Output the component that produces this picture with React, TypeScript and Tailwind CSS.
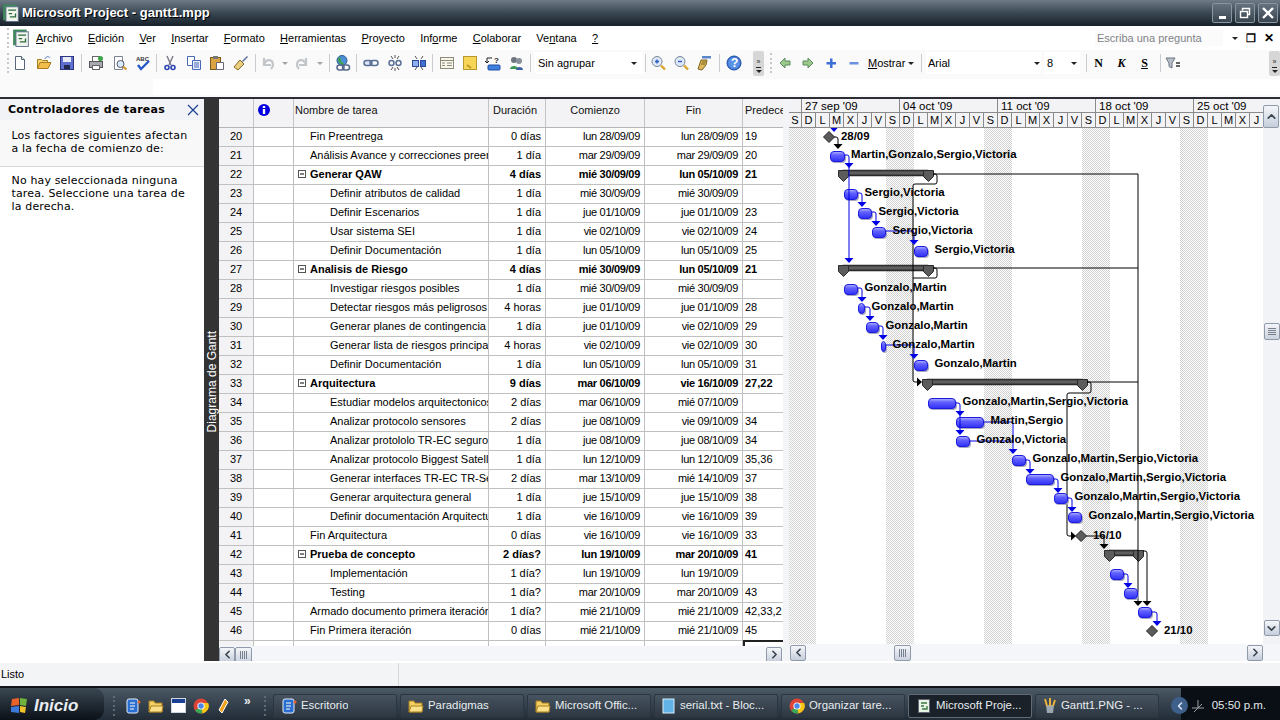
import type { ReactNode } from 'react'
import { ChevronLeft, ChevronRight, ChevronUp, ChevronDown } from 'lucide-react'

type Row = [number, number, string, string, string, string, string]

// id, level (0 summary, 1 top, 2 nested), name, duration, start, end, predecessors
const rows: Row[] = [
  [20, 1, 'Fin Preentrega', '0 días', 'lun 28/09/09', 'lun 28/09/09', '19'],
  [21, 1, 'Análisis Avance y correcciones preentrega', '1 día', 'mar 29/09/09', 'mar 29/09/09', '20'],
  [22, 0, 'Generar QAW', '4 días', 'mié 30/09/09', 'lun 05/10/09', '21'],
  [23, 2, 'Definir atributos de calidad', '1 día', 'mié 30/09/09', 'mié 30/09/09', ''],
  [24, 2, 'Definir Escenarios', '1 día', 'jue 01/10/09', 'jue 01/10/09', '23'],
  [25, 2, 'Usar sistema SEI', '1 día', 'vie 02/10/09', 'vie 02/10/09', '24'],
  [26, 2, 'Definir Documentación', '1 día', 'lun 05/10/09', 'lun 05/10/09', '25'],
  [27, 0, 'Analisis de Riesgo', '4 días', 'mié 30/09/09', 'lun 05/10/09', '21'],
  [28, 2, 'Investigar riesgos posibles', '1 día', 'mié 30/09/09', 'mié 30/09/09', ''],
  [29, 2, 'Detectar riesgos más peligrosos', '4 horas', 'jue 01/10/09', 'jue 01/10/09', '28'],
  [30, 2, 'Generar planes de contingencia', '1 día', 'jue 01/10/09', 'vie 02/10/09', '29'],
  [31, 2, 'Generar lista de riesgos principales', '4 horas', 'vie 02/10/09', 'vie 02/10/09', '30'],
  [32, 2, 'Definir Documentación', '1 día', 'lun 05/10/09', 'lun 05/10/09', '31'],
  [33, 0, 'Arquitectura', '9 días', 'mar 06/10/09', 'vie 16/10/09', '27,22'],
  [34, 2, 'Estudiar modelos arquitectonicos', '2 días', 'mar 06/10/09', 'mié 07/10/09', ''],
  [35, 2, 'Analizar protocolo sensores', '2 días', 'jue 08/10/09', 'vie 09/10/09', '34'],
  [36, 2, 'Analizar protololo TR-EC seguro', '1 día', 'jue 08/10/09', 'jue 08/10/09', '34'],
  [37, 2, 'Analizar protocolo Biggest Satellite', '1 día', 'lun 12/10/09', 'lun 12/10/09', '35,36'],
  [38, 2, 'Generar interfaces TR-EC TR-Sensores', '2 días', 'mar 13/10/09', 'mié 14/10/09', '37'],
  [39, 2, 'Generar arquitectura general', '1 día', 'jue 15/10/09', 'jue 15/10/09', '38'],
  [40, 2, 'Definir documentación Arquitectura', '1 día', 'vie 16/10/09', 'vie 16/10/09', '39'],
  [41, 1, 'Fin Arquitectura', '0 días', 'vie 16/10/09', 'vie 16/10/09', '33'],
  [42, 0, 'Prueba de concepto', '2 días?', 'lun 19/10/09', 'mar 20/10/09', '41'],
  [43, 2, 'Implementación', '1 día?', 'lun 19/10/09', 'lun 19/10/09', ''],
  [44, 2, 'Testing', '1 día?', 'mar 20/10/09', 'mar 20/10/09', '43'],
  [45, 1, 'Armado documento primera iteración', '1 día?', 'mié 21/10/09', 'mié 21/10/09', '42,33,2'],
  [46, 1, 'Fin Primera iteración', '0 días', 'mié 21/10/09', 'mié 21/10/09', '45'],
]

// the chart svg's viewBox uses page pixels, so these numbers read straight off the screenshot
const X0 = 789
const Y0 = 128
const rowTop = (id: number) => 127 + (id - 20) * 19

const bars: [number, number, number, string][] = [
  [21, 830, 845, 'Martin,Gonzalo,Sergio,Victoria'],
  [23, 844, 858, 'Sergio,Victoria'],
  [24, 858, 872, 'Sergio,Victoria'],
  [25, 872, 886, 'Sergio,Victoria'],
  [26, 914, 928, 'Sergio,Victoria'],
  [28, 844, 858, 'Gonzalo,Martin'],
  [29, 858, 865, 'Gonzalo,Martin'],
  [30, 866, 879, 'Gonzalo,Martin'],
  [31, 881, 886, 'Gonzalo,Martin'],
  [32, 914, 928, 'Gonzalo,Martin'],
  [34, 928, 956, 'Gonzalo,Martin,Sergio,Victoria'],
  [35, 956, 984, 'Martin,Sergio'],
  [36, 956, 970, 'Gonzalo,Victoria'],
  [37, 1012, 1026, 'Gonzalo,Martin,Sergio,Victoria'],
  [38, 1026, 1054, 'Gonzalo,Martin,Sergio,Victoria'],
  [39, 1054, 1068, 'Gonzalo,Martin,Sergio,Victoria'],
  [40, 1068, 1082, 'Gonzalo,Martin,Sergio,Victoria'],
  [43, 1110, 1124, ''],
  [44, 1124, 1138, ''],
  [45, 1138, 1152, ''],
]

const summaries: [number, number, number][] = [
  [22, 838, 933],
  [27, 838, 933],
  [33, 922, 1087],
  [42, 1104, 1143],
]

const milestones: [number, number, string][] = [
  [20, 829, '28/09'],
  [41, 1081, '16/10'],
  [46, 1152, '21/10'],
]

const blueLinks = [
  'M845 155H847Q849 155 849 157V262',
  'M858 193H860Q862 193 862 195V206',
  'M872 212H874Q876 212 876 214V225',
  'M886 231H912Q914 231 914 233V244',
  'M858 288H860Q862 288 862 290V301',
  'M865 307H868Q870 307 870 309V320',
  'M879 326H881Q883 326 883 328V339',
  'M886 345H912Q914 345 914 347V358',
  'M956 403H958Q960 403 960 405V434',
  'M984 422H1011Q1013 422 1013 424V453',
  'M970 441H1013',
  'M1026 460H1028Q1030 460 1030 462V473',
  'M1054 479H1056Q1058 479 1058 481V492',
  'M1068 498H1070Q1072 498 1072 500V511',
  'M1124 574H1126Q1128 574 1128 576V587',
  'M1152 612H1155Q1157 612 1157 614V625',
]
const blueHeads: [number, number][] = [
  [849, 167], [849, 262], [862, 206], [876, 225], [914, 244], [862, 301], [870, 320], [883, 339],
  [914, 358], [960, 415], [960, 434], [1013, 453], [1030, 473], [1058, 492], [1072, 511], [1128, 587],
  [1157, 625], [834, 131],
]

const blackLinks = [
  'M834 137H836Q838 137 838 139V148',
  'M933 174H1138V604',
  'M933 268H1138',
  'M1087 382H1138',
  'M933 174H935Q937 174 937 176V182Q937 184 935 184H915Q913 184 913 186V380Q913 382 915 382H918',
  'M933 268H935Q937 268 937 270V276Q937 278 935 278H913',
  'M1087 382H1089Q1091 382 1091 384V391Q1091 393 1089 393H1069Q1067 393 1067 395V534Q1067 536 1069 536H1072',
  'M1086 536H1101Q1104 536 1104 538V548',
  'M1143 551H1145Q1147 551 1147 553V604',
]
const blackDown: [number, number][] = [[838, 148], [1104, 548], [1138, 605], [1147, 605]]
const blackRight: [number, number][] = [[921, 382], [1075, 536]]

function GanttChart() {
  const stripes = [788, 886, 984, 1082, 1180]
  return (
    <svg width={474} height={518} viewBox={`${X0} ${Y0} 474 518`} className="block">
      <defs>
        <pattern id="dots" width="2" height="2" patternUnits="userSpaceOnUse">
          <rect width="2" height="2" fill="#ffffff" />
          <rect width="1" height="1" fill="#d2d2d2" />
          <rect x="1" y="1" width="1" height="1" fill="#d2d2d2" />
        </pattern>
        <linearGradient id="bar" x1="0" y1="0" x2="0" y2="1">
          <stop offset="0" stopColor="#b4b4ff" />
          <stop offset="0.35" stopColor="#6262ff" />
          <stop offset="1" stopColor="#3030f4" />
        </linearGradient>
        <linearGradient id="sum" x1="0" y1="0" x2="0" y2="1">
          <stop offset="0" stopColor="#2c2c2c" />
          <stop offset="0.5" stopColor="#6a6a6a" />
          <stop offset="1" stopColor="#222222" />
        </linearGradient>
      </defs>
      {stripes.map(s => (
        <rect key={s} x={s} y={Y0} width={28} height={518} fill="url(#dots)" />
      ))}
      {summaries.map(([id, a, b]) => {
        const t = rowTop(id) + 5
        return (
          <g key={id}>
            <rect x={a + 5} y={t} width={b - a - 10} height={6} fill="url(#sum)" stroke="#222222" strokeWidth={0.5} />
            {[a, b - 10].map(x => (
              <path key={x} d={`M${x + 0.5} ${t + 0.5}h10v6l-5 5l-5 -5z`} fill="#5c5c5c" stroke="#2a2a2a" />
            ))}
          </g>
        )
      })}
      <g fill="none" stroke="#000000" strokeWidth={1}>
        {blackLinks.map(d => <path key={d} d={d} />)}
      </g>
      {blackDown.map(([x, y]) => <path key={`${x}-${y}`} d={`M${x - 4.5} ${y - 4}h9l-4.5 5z`} fill="#000000" />)}
      {blackRight.map(([x, y]) => <path key={`${x}-${y}`} d={`M${x - 4} ${y - 4.5}v9l5 -4.5z`} fill="#000000" />)}
      {bars.map(([id, a, b]) => {
        const t = rowTop(id) + 5
        return (
          <g key={id}>
            <rect x={a + 1} y={t + 2} width={b - a} height={10} rx={4} fill="#a8a8be" />
            <rect x={a + 0.5} y={t + 0.5} width={b - a - 1} height={10} rx={3.5} fill="url(#bar)" stroke="#1c1ce0" />
          </g>
        )
      })}
      <g fill="none" stroke="#0000e6" strokeWidth={1}>
        {blueLinks.map(d => <path key={d} d={d} />)}
      </g>
      {blueHeads.map(([x, y]) => <path key={`${x}-${y}`} d={`M${x - 4.5} ${y - 4}h9l-4.5 5z`} fill="#0000e6" />)}
      {milestones.map(([id, x]) => {
        const c = rowTop(id) + 10
        return <path key={id} d={`M${x} ${c - 5.5}l5.5 5.5l-5.5 5.5l-5.5 -5.5z`} fill="#5c5c5c" stroke="#222222" />
      })}
      <g className="font-['Liberation_Sans',sans-serif] text-[11.4px] font-bold" fill="#000000">
        {bars.filter(b => b[3]).map(([id, , b, label]) => (
          <text key={id} x={id === 21 ? 851 : b + 6.5} y={rowTop(id) + 12}>{label}</text>
        ))}
        {milestones.map(([id, x, label]) => (
          <text key={id} x={x + 12} y={rowTop(id) + 13}>{label}</text>
        ))}
      </g>
    </svg>
  )
}

function Scroll({ dir, tall }: { dir: 'l' | 'r' | 'u' | 'd'; tall?: boolean }) {
  const Icon = dir === 'l' ? ChevronLeft : dir === 'r' ? ChevronRight : dir === 'u' ? ChevronUp : ChevronDown
  return (
    <div className={`flex w-[16px] shrink-0 items-center justify-center rounded-[2px] border border-[#8f9bab] bg-gradient-to-b from-[#f4f6f9] to-[#c6cedb] ${tall ? 'h-[23px]' : 'h-[16px]'}`}>
      <Icon size={13} strokeWidth={3} className="text-[#39424f]" />
    </div>
  )
}

function Thumb({ vertical = false }: { vertical?: boolean }) {
  return (
    <div className={`flex items-center justify-center gap-px rounded-[2px] border border-[#8f9bab] bg-gradient-to-b from-[#f4f6f9] to-[#cbd2de] ${vertical ? 'h-[17px] w-[16px] flex-col' : 'h-[16px] w-[17px]'}`}>
      {[0, 1, 2, 3].map(i => (
        <div key={i} className={`bg-[#77808e] ${vertical ? 'h-px w-[8px]' : 'h-[8px] w-px'}`} />
      ))}
    </div>
  )
}

// small toolbar drawings, each 16x16
function Tool({ kind, className = '' }: { kind: string; className?: string }) {
  const body: Record<string, ReactNode> = {
    new: <><path d="M3.5 1.5h6l3 3v10h-9z" fill="#fff" stroke="#59667a" /><path d="M9.5 1.5v3h3" fill="#dfe6f2" stroke="#59667a" /></>,
    open: <><path d="M1.5 13.5v-9h4l1 1h5v2" fill="#f7d774" stroke="#a97c1c" /><path d="M1.5 13.5l2.5-6h11l-3 6z" fill="#f3bd4b" stroke="#a97c1c" /><path d="M9 4c1-3 4-3 5-1" fill="none" stroke="#5d7fc0" /></>,
    save: <><rect x="1.5" y="1.5" width="13" height="13" fill="#5f6fd0" stroke="#2b347c" /><rect x="4" y="2" width="8" height="5" fill="#e8eaf8" /><rect x="5" y="10" width="6" height="4" fill="#23284f" /></>,
    print: <><rect x="4.5" y="1.5" width="7" height="5" fill="#fff" stroke="#666" /><rect x="1.5" y="6.5" width="13" height="6" fill="#a9a9b1" stroke="#555" /><rect x="4.5" y="10.5" width="7" height="4" fill="#fff" stroke="#666" /><circle cx="12.5" cy="3.5" r="2.5" fill="#3aa548" /></>,
    preview: <><path d="M2.5 1.5h8v13h-8z" fill="#fff" stroke="#7b8494" /><circle cx="8.5" cy="9" r="3.5" fill="#d9ecff" stroke="#556" /><path d="M11 11.5l3.5 3" stroke="#d0912a" strokeWidth="2.2" /></>,
    spell: <><text x="1" y="6" fontSize="6" fontWeight="700" fill="#333" fontFamily="Liberation Sans">ABC</text><path d="M3 10l3 4l8-8" fill="none" stroke="#2a58c8" strokeWidth="2.4" /></>,
    cut: <><path d="M5 1l4 9M11 1l-4 9" stroke="#778" strokeWidth="1.4" /><circle cx="5" cy="12.5" r="2" fill="none" stroke="#2b45b5" strokeWidth="1.6" /><circle cx="11" cy="12.5" r="2" fill="none" stroke="#2b45b5" strokeWidth="1.6" /></>,
    copy: <><path d="M1.5 1.5h7v9h-7z" fill="#fff" stroke="#4a68b8" /><path d="M6.5 5.5h8v9h-8z" fill="#e8efff" stroke="#4a68b8" /><path d="M8 8h5M8 10h5M8 12h5" stroke="#4a68b8" /></>,
    paste: <><rect x="1.5" y="2.5" width="10" height="12" fill="#d9a441" stroke="#7a5a18" /><rect x="4" y="1" width="5" height="3" fill="#777" /><path d="M7.5 7.5h7v7h-7z" fill="#fff" stroke="#667" /></>,
    brush: <><path d="M9 6l5-5l1 1l-5 5z" fill="#5a6d9a" /><path d="M1 12l6-7l4 4l-6 6z" fill="#e8d080" stroke="#8a6a20" /></>,
    undo: <path d="M4 3v7h7M4 10c2-7 9-6 9 0c0 2-1 3-2 4" fill="none" stroke="#c2c5ca" strokeWidth="2.2" />,
    redo: <path d="M12 3v7H5M12 10c-2-7-9-6-9 0c0 2 1 3 2 4" fill="none" stroke="#c2c5ca" strokeWidth="2.2" />,
    globe: <><circle cx="7" cy="5.5" r="5" fill="#4d8fd6" stroke="#2a5a90" /><path d="M4 2c2 1 3 3 2 5c2 0 3 1 3 3c-3 0-6-2-6-6z" fill="#3fa34d" /><rect x="2" y="10" width="7" height="5" rx="2.5" fill="none" stroke="#56688c" strokeWidth="1.5" /><rect x="7.5" y="10" width="7" height="5" rx="2.5" fill="none" stroke="#56688c" strokeWidth="1.5" /></>,
    link: <><rect x="1" y="5.5" width="8" height="5" rx="2.5" fill="#dde6f5" stroke="#5a6f96" strokeWidth="1.5" /><rect x="7" y="5.5" width="8" height="5" rx="2.5" fill="none" stroke="#5a6f96" strokeWidth="1.5" /></>,
    unlink: <><rect x="2" y="5.5" width="5" height="5" rx="2.5" fill="none" stroke="#5a6f96" strokeWidth="1.5" /><rect x="9" y="5.5" width="5" height="5" rx="2.5" fill="none" stroke="#5a6f96" strokeWidth="1.5" /><path d="M4 1l2 3M12 1l-2 3M4 15l2-3M12 15l-2-3M8 0v3M8 13v3" stroke="#555" /></>,
    split: <><rect x="1.5" y="5.5" width="6" height="6" fill="#8db0f0" stroke="#2a4a98" /><rect x="9.5" y="5.5" width="5" height="6" fill="#3f6fd0" stroke="#2a4a98" /><path d="M4 1l2 3M12 1l-2 3M4 15l2-3M12 15l-2-3" stroke="#555" /></>,
    info: <><rect x="1.5" y="2.5" width="13" height="11" fill="#f8f6ea" stroke="#8c8a78" /><path d="M2 5.5h12M8 8h5M8 10.5h5M3 8h3M3 10.5h3" stroke="#8c8a78" /></>,
    note: <><rect x="1.5" y="1.5" width="13" height="13" fill="#f6d557" stroke="#b7982c" /><path d="M5 10l4 3" stroke="#c29a2a" strokeWidth="2" /></>,
    goto: <><rect x="3" y="10" width="12" height="5" rx="1" fill="#3f7fe0" stroke="#1f4ea0" /><path d="M7 3H2v5M2 8l-2-2M2 8l2-2" stroke="#222" fill="none" /><text x="9" y="8" fontSize="8" fontWeight="700" fill="#222" fontFamily="Liberation Sans">?</text></>,
    people: <><circle cx="6" cy="5" r="3" fill="#6d7680" /><path d="M2 14c0-4 8-4 8 0z" fill="#3d9a52" /><circle cx="11" cy="6" r="3" fill="#8a919b" /><path d="M8 15c0-4 7-4 7 0z" fill="#3f5fa8" /></>,
    zoomin: <><circle cx="7" cy="6.5" r="5" fill="#dfe9f5" stroke="#77859b" /><path d="M5 6.5h4M7 4.5v4" stroke="#2a58c8" strokeWidth="1.4" /><path d="M11 10.5l4 4" stroke="#d9a52a" strokeWidth="2.4" /></>,
    zoomout: <><circle cx="7" cy="6.5" r="5" fill="#dfe9f5" stroke="#77859b" /><path d="M5 6.5h4" stroke="#2a58c8" strokeWidth="1.4" /><path d="M11 10.5l4 4" stroke="#d9a52a" strokeWidth="2.4" /></>,
    gotoTask: <><rect x="6" y="1" width="9" height="2.5" fill="#5d86c8" /><path d="M2 14l3-9h6l-1 5l-4 5z" fill="#dcb95a" stroke="#7d6420" /><path d="M6 7h4M5 9h4" stroke="#7d6420" /></>,
    help: <><circle cx="8" cy="8" r="7" fill="#3f78d8" stroke="#1d4aa0" /><circle cx="8" cy="8" r="5.6" fill="#5a92e6" /><text x="5" y="12.2" fontSize="12" fontWeight="700" fill="#fff" fontFamily="Liberation Sans">?</text></>,
    back: <path d="M3 8l5-5v3h5v4H8v3z" fill="#9cc98a" stroke="#5d8c60" />,
    fwd: <path d="M13 8L8 3v3H3v4h5v3z" fill="#9cc98a" stroke="#5d8c60" />,
    plus: <path d="M7 3.5h2.5v3.5H13v2.5H9.5V13H7V9.5H3.5V7H7z" fill="#3f6fd8" />,
    minus: <rect x="3.5" y="7" width="9" height="2.5" fill="#6a90e0" />,
    filter: <><path d="M1 3h9l-3 5v5l-3-1.5V8z" fill="#b9c0ca" stroke="#6c7480" /><path d="M11 8h4M11 11h4" stroke="#333" strokeWidth="1.5" /></>,
  }
  return <svg width={16} height={16} viewBox="0 0 16 16" className={`shrink-0 ${className}`}>{body[kind]}</svg>
}

function Sep({ className = '' }: { className?: string }) {
  return <div className={`h-[18px] w-px shrink-0 bg-[#c9ccd1] ${className}`} />
}

function Grip({ className = 'ml-[3px]' }: { className?: string }) {
  return (
    <div className={`mr-[3px] flex h-[20px] w-[2px] shrink-0 flex-col justify-between ${className}`}>
      {[0, 1, 2, 3, 4].map(i => <div key={i} className="h-[2px] w-[2px] bg-[#c5c8cc]" />)}
    </div>
  )
}

function DarkGrip({ className = '' }: { className?: string }) {
  return (
    <div className={`flex h-[20px] w-[2px] shrink-0 flex-col justify-between ${className}`}>
      {[0, 1, 2, 3, 4].map(i => <div key={i} className="h-[2px] w-[2px] bg-[#5f6a75]" />)}
    </div>
  )
}

function Caret() {
  return <div className="h-0 w-0 shrink-0 border-x-[3px] border-t-[3px] border-x-transparent border-t-[#222]" />
}

function Overflow({ className = '' }: { className?: string }) {
  return (
    <div className={`flex h-[25px] w-[11px] shrink-0 flex-col items-center justify-end gap-[2px] rounded-[2px] bg-[#d6d6d6] pb-[3px] ${className}`}>
      <span className="text-[7px] leading-[7px] text-[#222]">»</span>
      <div className="h-px w-[5px] bg-[#222]" />
      <Caret />
    </div>
  )
}

function Menu({ k, pre, rest }: { k: string; pre?: string; rest: string }) {
  return <span>{pre}<u>{k}</u>{rest}</span>
}

function TaskBtn({ label, icon, active }: { label: string; icon: ReactNode; active?: boolean }) {
  return (
    <div className={`flex h-[24px] w-[124px] shrink-0 items-center gap-[4px] rounded-[2px] border pl-[7px] text-[11.4px] ${active ? 'border-[#5f6a75] bg-[#1a2128]' : 'border-[#2b3640] bg-gradient-to-b from-[#47535f] to-[#2c3742]'}`}>
      {icon}
      <span className="truncate">{label}</span>
    </div>
  )
}

const folder = (
  <svg width="16" height="14" viewBox="0 0 16 14" className="shrink-0"><path d="M1 13V2h5l1 2h7v9z" fill="#f4cf62" stroke="#a67f22" /><path d="M1 13l2-6h12l-1 6z" fill="#fbe08a" stroke="#a67f22" /></svg>
)
const desk = (
  <svg width="16" height="16" viewBox="0 0 16 16" className="shrink-0"><rect x="2" y="1" width="11" height="14" rx="2" fill="#2a6fd0" stroke="#e6eefc" /><path d="M5 5h5M5 8h5M5 11h4" stroke="#fff" /><circle cx="14" cy="4" r="1.5" fill="#e8622a" /></svg>
)
const chrome = (
  <svg width="16" height="16" viewBox="0 0 16 16" className="shrink-0"><circle cx="8" cy="8" r="7.5" fill="#dc4437" /><path d="M8 8L2 12.5A7.5 7.5 0 0 0 9.5 15.4z" fill="#3aa757" /><path d="M8 8l1.5 7.4A7.5 7.5 0 0 0 15.2 5H8z" fill="#f5c518" /><circle cx="8" cy="8" r="3.6" fill="#fff" /><circle cx="8" cy="8" r="2.7" fill="#4a86e8" /></svg>
)
const projIcon = (
  <svg width="16" height="16" viewBox="0 0 16 16" className="shrink-0"><rect x="2.5" y="1.5" width="11" height="13" fill="#e9f3e6" stroke="#667" /><path d="M5 5h6M5 8h3M11 8v3H6" stroke="#3a7a45" strokeWidth="1.4" fill="none" /></svg>
)
const projIconBig = (
  <svg width="18" height="18" viewBox="0 0 16 16" className="shrink-0"><rect x="1" y="0.5" width="12" height="14" fill="#3f8a5a" /><rect x="3.5" y="2.5" width="11" height="13" fill="#f0f6ee" stroke="#5b6a88" strokeWidth="0.8" /><path d="M5.5 5.5h7M6 8.5h3M12 8.5v3H7" stroke="#2f6a3c" strokeWidth="1.2" fill="none" /></svg>
)

const tableCols = 'grid-cols-[35px_40px_195px_57px_99px_98px_40px]'

export default function App() {
  return (
    <div className="flex h-[720px] w-[1280px] flex-col overflow-hidden bg-white font-['Liberation_Sans',sans-serif] text-[11px] text-black">
      {/* Title bar */}
      <div className="flex h-[26px] shrink-0 items-center bg-gradient-to-b from-[#6f7c88] via-[#3a4853] to-[#18212b] pl-[2px] pr-[2px]">
        {projIconBig}
        <span className="ml-[2px] text-[13px] font-bold text-white [text-shadow:1px_1px_0_#000]">Microsoft Project - gantt1.mpp</span>
        <div className="ml-auto flex gap-[3px]">
          <div className="flex h-[20px] w-[20px] items-end justify-center rounded-[2px] border border-[#8995a0] bg-gradient-to-b from-[#66737f] to-[#39454f] pb-[3px]"><div className="h-[3px] w-[7px] bg-white" /></div>
          <div className="flex h-[20px] w-[20px] items-center justify-center rounded-[2px] border border-[#8995a0] bg-gradient-to-b from-[#66737f] to-[#39454f]">
            <svg width="12" height="12" viewBox="0 0 12 12" fill="none" stroke="#fff"><path d="M3.5 3.5v-2h7v6h-2" strokeWidth="1.4" /><rect x="1.5" y="4.5" width="7" height="6" strokeWidth="1.4" /></svg>
          </div>
          <div className="flex h-[20px] w-[20px] items-center justify-center rounded-[2px] border border-[#8995a0] bg-gradient-to-b from-[#66737f] to-[#39454f]">
            <svg width="14" height="14" viewBox="0 0 14 14"><path d="M2 2l10 10M12 2L2 12" stroke="#fff" strokeWidth="2.4" /></svg>
          </div>
        </div>
      </div>

      {/* Menu */}
      <div className="flex h-[24px] shrink-0 items-center bg-white pl-[4px] pr-[6px] text-[11px]">
        <Grip />
        {projIconBig}
        <div className="ml-[6px] flex gap-[15.3px]">
          <Menu k="A" rest="rchivo" />
          <Menu k="E" rest="dición" />
          <Menu k="V" rest="er" />
          <Menu k="I" rest="nsertar" />
          <Menu k="F" rest="ormato" />
          <Menu k="H" rest="erramientas" />
          <Menu k="P" rest="royecto" />
          <Menu pre="Inf" k="o" rest="rme" />
          <Menu k="C" rest="olaborar" />
          <Menu pre="Ve" k="n" rest="tana" />
          <Menu k="?" rest="" />
        </div>
        <span className="ml-auto w-[128px] bg-[#fbfbfb] pl-[2px] text-[#7f8388]">Escriba una pregunta</span>
        <div className="ml-[9px] flex items-center gap-[8px]">
          <Caret />
          <span className="text-[11px] font-bold leading-none">❐</span>
          <span className="text-[12px] font-bold leading-none">✕</span>
        </div>
      </div>

      {/* Toolbar */}
      <div className="flex h-[26px] shrink-0 items-center bg-[#fafafa] pl-[4px]">
        <Grip />
        <div className="flex items-center gap-[7.5px]">
          <Tool kind="new" /><Tool kind="open" /><Tool kind="save" />
        </div>
        <Sep className="ml-[6px]" />
        <div className="ml-[6px] flex items-center gap-[7.5px]">
          <Tool kind="print" /><Tool kind="preview" /><Tool kind="spell" />
        </div>
        <Sep className="ml-[5px]" />
        <div className="ml-[5px] flex items-center gap-[7.5px]">
          <Tool kind="cut" /><Tool kind="copy" /><Tool kind="paste" /><Tool kind="brush" />
        </div>
        <Sep className="ml-[6.5px]" />
        <div className="ml-[4px] flex items-center">
          <Tool kind="undo" />
          <div className="ml-[6px] opacity-40"><Caret /></div>
          <Tool kind="redo" className="ml-[6px]" />
          <div className="ml-[7px] opacity-40"><Caret /></div>
        </div>
        <Sep className="ml-[6px]" />
        <Tool kind="globe" className="ml-[5px]" />
        <Sep className="ml-[5px]" />
        <div className="ml-[6px] flex items-center gap-[8px]">
          <Tool kind="link" /><Tool kind="unlink" /><Tool kind="split" />
        </div>
        <Sep className="ml-[5px]" />
        <div className="ml-[6px] flex items-center gap-[7px]">
          <Tool kind="info" /><Tool kind="note" /><Tool kind="goto" /><Tool kind="people" />
        </div>
        <Sep className="ml-[6px]" />
        <div className="ml-[4px] flex h-[22px] w-[108px] shrink-0 items-center justify-between bg-white pl-[3px] pr-[6px]">
          <span>Sin agrupar</span><Caret />
        </div>
        <Sep className="ml-[2px]" />
        <div className="ml-[4px] flex items-center gap-[7px]">
          <Tool kind="zoomin" /><Tool kind="zoomout" /><Tool kind="gotoTask" />
        </div>
        <Sep className="ml-[7px]" />
        <Tool kind="help" className="ml-[6px]" />
        <Overflow className="ml-[11px]" />
        <Grip className="ml-[6px]" />
        <div className="ml-[2px] flex items-center gap-[7px]">
          <Tool kind="back" /><Tool kind="fwd" /><Tool kind="plus" /><Tool kind="minus" />
        </div>
        <span className="ml-[6px] w-[37px] shrink-0"><u>M</u>ostrar</span>
        <div className="ml-[3px]"><Caret /></div>
        <Sep className="ml-[7px]" />
        <div className="ml-[4px] flex h-[22px] w-[115px] shrink-0 items-center justify-between bg-white pl-[2px] pr-px">
          <span>Arial</span><Caret />
        </div>
        <div className="ml-[3px] flex h-[22px] w-[36px] shrink-0 items-center justify-between bg-white pl-[3px] pr-[3px]">
          <span>8</span><Caret />
        </div>
        <Sep className="ml-[6px]" />
        <div className="flex items-center font-['Liberation_Serif',serif] text-[12px] font-bold">
          <span className="w-[23px] text-center">N</span>
          <i className="w-[23px] text-center">K</i>
          <u className="w-[23px] text-center">S</u>
        </div>
        <Sep className="ml-[4px]" />
        <Tool kind="filter" className="ml-[4px]" />
        <Overflow className="ml-auto" />
      </div>

      {/* Entry bar */}
      <div className="flex h-[21px] shrink-0 bg-[#fafafa] pb-[2px] pl-[153px] pt-[3px]">
        <div className="flex-1 bg-white" />
      </div>

      {/* Main */}
      <div className="flex min-h-0 flex-1 border-t-2 border-[#2d2d35] bg-[#f3f4f7]">
        {/* Task pane */}
        <div className="flex w-[204px] shrink-0 flex-col bg-white font-['DejaVu_Sans',sans-serif] text-[11px] tracking-[0.15px]">
          <div className="flex h-[21px] shrink-0 items-center justify-between bg-[#f2f3f6] pl-[8px] pr-[5px] pt-[2px]">
            <b className="text-[11px] tracking-[0.3px]">Controladores de tareas</b>
            <svg width="12" height="12" viewBox="0 0 12 12" className="-mt-[2px]"><path d="M1 1l10 10M11 1L1 11" stroke="#1a3f94" strokeWidth="1.2" /></svg>
          </div>
          <div className="h-[47px] shrink-0 border-b border-[#d8d8d8] bg-[#f8f8f8] px-[11.5px] pt-[9px] leading-[13px]">
            <p>Los factores siguientes afectan</p>
            <p>a la fecha de comienzo de:</p>
          </div>
          <div className="px-[11.5px] pt-[7px] leading-[13px]">
            <p>No hay seleccionada ninguna</p>
            <p>tarea. Seleccione una tarea de</p>
            <p>la derecha.</p>
          </div>
        </div>

        {/* View bar */}
        <div className="flex w-[15px] shrink-0 items-end justify-center bg-[#333333] pb-[229px]">
          <span className="rotate-180 whitespace-nowrap text-[12px] text-white [writing-mode:vertical-rl]">Diagrama de Gantt</span>
        </div>

        {/* Table */}
        <div className="flex w-[564px] shrink-0 flex-col">
          <div className="h-[29px] shrink-0 overflow-hidden border-b border-[#b5b5b5] bg-[#f3f3f5]">
            <div className={`grid h-full ${tableCols} text-[#111]`}>
              <div className="border-r border-[#c4c4c4]" />
              <div className="flex items-start justify-center border-r border-[#c4c4c4] pr-[19px] pt-[5px]">
                <svg width="12" height="12" viewBox="0 0 12 12"><circle cx="6" cy="6" r="6" fill="#0000e0" /><rect x="4.8" y="2" width="2.4" height="2" fill="#fff" /><rect x="4.8" y="5" width="2.4" height="5" fill="#fff" /></svg>
              </div>
              <div className="border-r border-[#c4c4c4] pl-px pt-[3px]">Nombre de tarea</div>
              <div className="border-r border-[#c4c4c4] pl-[4px] pt-[3px]">Duración</div>
              <div className="border-r border-[#c4c4c4] pt-[3px] text-center">Comienzo</div>
              <div className="border-r border-[#c4c4c4] pt-[3px] text-center">Fin</div>
              <div className="overflow-hidden whitespace-nowrap pl-[2px] pt-[3px]">Predecesoras</div>
            </div>
          </div>
          <div className="relative h-[518px] shrink-0 overflow-hidden bg-white">
            {rows.map(([id, level, name, dur, start, end, pred]) => (
              <div key={id} className={`grid h-[19px] ${tableCols} border-b border-[#c0c0c0] leading-[16px] ${level === 0 ? 'font-bold' : ''}`}>
                <div className="border-r border-[#c0c0c0] bg-[#f3f3f5] text-center font-normal">{id}</div>
                <div className="border-r border-[#c0c0c0]" />
                <div className={`flex h-[18px] items-start overflow-hidden whitespace-nowrap border-r border-[#c0c0c0] ${level === 2 ? 'pl-[36px]' : level === 1 ? 'pl-[16px]' : 'pl-[4px]'}`}>
                  {level === 0 && (
                    <svg width="8" height="8" viewBox="0 0 8 8" className="mr-[4px] mt-[4px] shrink-0"><rect x=".5" y=".5" width="7" height="7" fill="#fff" stroke="#555" /><path d="M2 4h4" stroke="#000" /></svg>
                  )}
                  {name}
                </div>
                <div className="border-r border-[#c0c0c0] pr-[4px] text-right">{dur}</div>
                <div className="border-r border-[#c0c0c0] pr-[4px] text-right tracking-[-0.3px]">{start}</div>
                <div className="border-r border-[#c0c0c0] pr-[4px] text-right tracking-[-0.3px]">{end}</div>
                <div className="overflow-hidden whitespace-nowrap pl-[2px]">{pred}</div>
              </div>
            ))}
            <div className={`grid h-[5px] ${tableCols}`}>
              <div className="border-r border-[#c0c0c0] bg-[#f3f3f5]" />
              <div className="border-r border-[#c0c0c0]" />
              <div className="border-r border-[#c0c0c0]" />
              <div className="border-r border-[#c0c0c0]" />
              <div className="border-r border-[#c0c0c0]" />
              <div className="border-r border-[#c0c0c0]" />
              <div />
            </div>
            <div className="absolute bottom-0 right-0 h-[6px] w-[40px] border-l-2 border-t-2 border-[#222]" />
          </div>
          <div className="flex h-[17px] shrink-0 items-center justify-between bg-[#f5f6f9] pr-px">
            <div className="flex"><Scroll dir="l" /><Thumb /></div>
            <Scroll dir="r" />
          </div>
        </div>

        {/* Splitter */}
        <div className="w-[6px] shrink-0 bg-[#f3f4f7]" />

        {/* Gantt */}
        <div className="flex min-w-0 flex-1 flex-col">
          <div className="flex min-h-0 flex-1">
            <div className="flex w-[474px] shrink-0 flex-col">
              <div className="h-[29px] shrink-0 bg-[#f3f3f5] text-[11.5px] leading-[15px]">
                <div className="flex h-[14px] border-b border-[#8a8a8a]">
                  <div className="w-[13px] shrink-0 border-r border-[#8a8a8a]" />
                  {["27 sep '09", "04 oct '09", "11 oct '09", "18 oct '09", "25 oct '09"].map(w => (
                    <div key={w} className="w-[98px] shrink-0 whitespace-nowrap border-r border-[#8a8a8a] pl-[3px] last:border-r-0">{w}</div>
                  ))}
                </div>
                <div className="flex h-[15px] overflow-hidden border-b border-[#8a8a8a] text-[11px]">
                  <div className="w-[13px] shrink-0 border-r border-[#8a8a8a] text-center leading-[14px]">S</div>
                  {'DLMXJVSDLMXJVSDLMXJVSDLMXJVSDLMXJ'.split('').map((d, i) => (
                    <div key={i} className="w-[14px] shrink-0 border-r border-[#8a8a8a] text-center leading-[14px]">{d}</div>
                  ))}
                </div>
              </div>
              <div className="h-[518px] shrink-0 bg-white"><GanttChart /></div>
            </div>
            <div className="flex w-[17px] shrink-0 flex-col items-center bg-[#f1f3f7]">
              <div className="flex h-[29px] w-full items-end"><Scroll dir="u" tall /></div>
              <div className="mt-[195px]"><Thumb vertical /></div>
              <div className="mb-[8px] mt-auto"><Scroll dir="d" /></div>
            </div>
          </div>
          <div className="flex h-[17px] shrink-0 items-center bg-[#f5f6f9]">
            <div className="ml-px"><Scroll dir="l" /></div>
            <div className="ml-[88px]"><Thumb /></div>
            <div className="ml-auto mr-[17px]"><Scroll dir="r" /></div>
          </div>
        </div>
      </div>

      {/* Status */}
      <div className="flex h-[25px] shrink-0 items-center border-t-2 border-white bg-[#f3f4f6] pl-px">
        <div className="flex h-full w-[398px] items-center border-r border-[#d8d8d8]">Listo</div>
      </div>

      {/* Taskbar */}
      <div className="flex h-[34px] shrink-0 items-center border-t-2 border-[#101418] bg-gradient-to-b from-[#4b5965] to-[#212c37] text-[#e9edf0]">
        <div className="flex h-full w-[104px] shrink-0 items-center gap-[5px] rounded-r-[10px] bg-gradient-to-b from-[#3b4853] to-[#0b1118] pl-[10px] pt-[3px]">
          <svg width="19" height="19" viewBox="0 0 19 19">
            <path d="M2 3l7-1v7l-8 1z" fill="#e8622a" /><path d="M10 2l7 1-1 7-6-1z" fill="#6fb23c" /><path d="M1 11l8-1v7l-8-1z" fill="#3c79d8" /><path d="M10 10l6 1-1 6-5-1z" fill="#f0c22a" />
          </svg>
          <span className="text-[17px] font-bold italic">Inicio</span>
        </div>
        <div className="flex items-center pt-[3px]">
          <DarkGrip className="ml-[9px]" />
          <div className="ml-[10px] flex items-center gap-[7px]">
            {desk}
            <div className="w-[16px]">{folder}</div>
            <div className="h-[15px] w-[15px] shrink-0 border border-[#cfd6dc] bg-white"><div className="h-[4px] bg-[#1b3f94]" /></div>
            {chrome}
            <svg width="16" height="16" viewBox="0 0 16 16" className="shrink-0"><path d="M9 1l3 3-6 11-3-3z" fill="#f2a31b" stroke="#fff" /></svg>
          </div>
          <span className="-mt-[10px] ml-[12px] w-[7px] text-[12px] font-bold leading-none">»</span>
          <DarkGrip className="ml-[13px]" />
          <div className="ml-[7px] flex gap-[3px]">
            <TaskBtn label="Escritorio" icon={desk} />
            <TaskBtn label="Paradigmas" icon={folder} />
            <TaskBtn label="Microsoft Offic..." icon={folder} />
            <TaskBtn label="serial.txt - Bloc..." icon={<svg width="14" height="16" viewBox="0 0 14 16" className="shrink-0"><rect x="1" y="1" width="11" height="14" fill="#62b3e8" stroke="#d7eefc" /></svg>} />
            <TaskBtn label="Organizar tare..." icon={chrome} />
            <TaskBtn label="Microsoft Proje..." icon={projIcon} active />
            <TaskBtn label="Gantt1.PNG - ..." icon={<svg width="14" height="16" viewBox="0 0 14 16" className="shrink-0"><path d="M3 7h8l-1 8H4z" fill="#9ca6b0" /><path d="M4 8L2 1M7 8V0M10 8l2-6" stroke="#e8b23a" strokeWidth="2" /></svg>} />
          </div>
        </div>
        <div className="ml-auto flex h-full w-[99px] items-center bg-[#0a0f16] pt-[3px]">
          <div className="-ml-[10px] flex h-[17px] w-[17px] items-center justify-center rounded-full bg-[#3d5f8a] text-[#dfe8f2]"><ChevronLeft size={12} strokeWidth={3} /></div>
          <svg width="14" height="14" viewBox="0 0 14 14" className="ml-[3px]"><path d="M7 1v8M1 9h12M3 13l8-8" stroke="#9aa0a6" /></svg>
          <span className="ml-auto mr-[14px] whitespace-nowrap text-[11.5px] text-[#e4e8ec]">05:50 p.m.</span>
        </div>
      </div>
    </div>
  )
}
